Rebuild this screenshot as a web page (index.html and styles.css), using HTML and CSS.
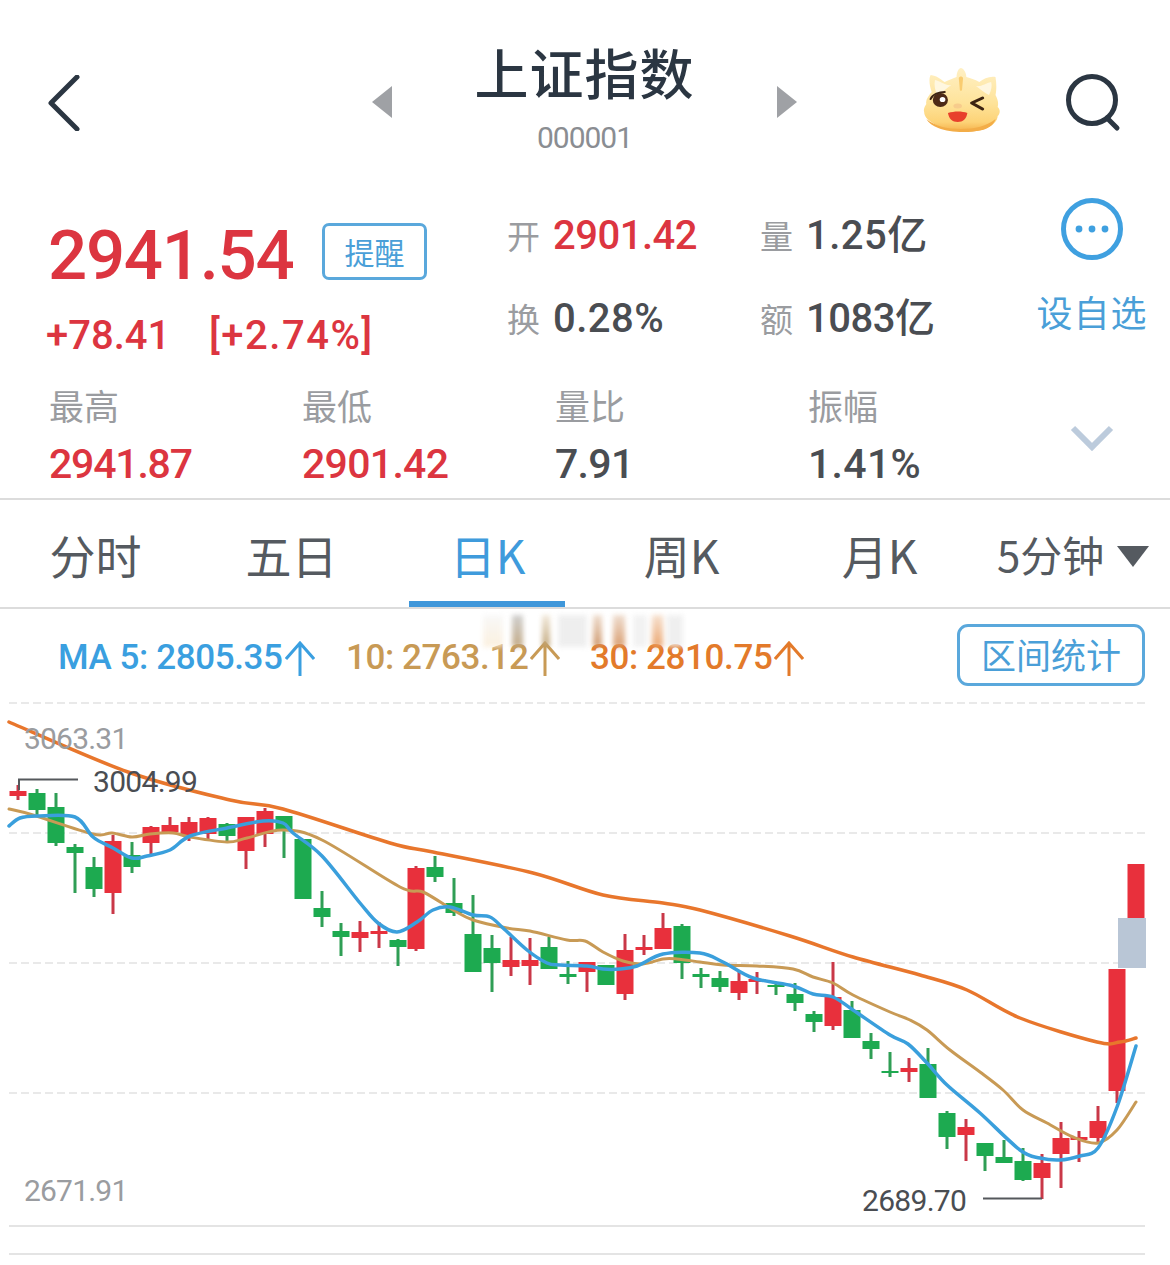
FILE: index.html
```html
<!DOCTYPE html>
<html lang="zh">
<head>
<meta charset="utf-8">
<title>上证指数</title>
<link rel="stylesheet" href="styles.css">
</head>
<body>
<div class="page">
  <header class="topbar">
    <svg class="back" width="34" height="56" viewBox="0 0 34 56"><path d="M30 2 4 28l26 26" /></svg>
    <div class="switcher">
      <svg width="22" height="32" viewBox="0 0 22 32"><path class="tri" d="M21 0v32L1 16z"/></svg>
      <div class="titles">
        <div class="title">上证指数</div>
        <div class="code">000001</div>
      </div>
      <svg width="22" height="32" viewBox="0 0 22 32"><path class="tri" d="M1 0v32l20-16z"/></svg>
    </div>
    <div class="actions">
      <svg class="mascot" width="80" height="68" viewBox="2 0 74 68" preserveAspectRatio="none">
        <defs>
          <linearGradient id="skin" x1="0" y1="0" x2="0" y2="1"><stop offset="0" stop-color="#fff0c4"/><stop offset=".55" stop-color="#fee39a"/><stop offset=".85" stop-color="#fdd377"/><stop offset="1" stop-color="#f5b04a"/></linearGradient>
        </defs>
        <path fill="url(#skin)" d="M10 9c6 1 9 4 13 7 4-2 8-4 11-5 0-5 2-9 4-9s5 4 5 9c4 1 9 3 12 5 4-3 9-6 15-5 1 6 1 13 0 18 2 4 3 8 2 12 3 3 2 7 0 9 0 5-5 10-12 13-8 3-17 3-24 2-9 0-18-3-24-8-5-3-8-7-8-11-1-3 1-6 2-8-1-4 2-8 5-12-2-6-3-13-1-17z"/>
        <path fill="#fff7e0" d="M14 14c5 1 10 6 15 5-5 4-9 8-13 10-2-5-3-10-2-15zM66 16c-5 1-9 5-14 4 4 3 8 7 12 9 2-4 3-9 2-13z"/>
        <path fill="#f9cc70" d="M36 12c1-2 3-2 4 0l-1 12c0 1-2 1-2 0z"/>
        <path fill="#f3ad48" d="M6 53c8 7 19 10 32 10s24-3 32-10c-1 5-6 9-12 11-12 3-30 3-41-2-5-2-9-5-11-9z"/>
        <circle cx="19" cy="34" r="7" fill="#4d2a16"/><circle cx="21" cy="33.500" r="2.600" fill="#fff"/>
        <path class="lash" d="M10 33c2-5 8-7 13-7"/>
        <path class="wink" d="M58 32 48 37l10 6"/>
        <ellipse cx="35" cy="40" rx="4" ry="2.500" fill="#f7cc8c"/>
        <path fill="#e8402c" d="M26 47c6-2 13-2 18 0-1 6-4 9-9 9s-8-3-9-9z"/>
      </svg>
      <svg class="search" width="56" height="58" viewBox="0 0 56 58"><circle cx="27" cy="26" r="23.500"/><path d="m42 44 10 10"/></svg>
    </div>
  </header>

  <section class="quote">
    <div class="main">
      <div class="price-row"><span class="price">2941.54</span><span class="remind">提醒</span></div>
      <div class="change"><span class="chg-a">+78.41</span><span class="chg-b">[+2.74%]</span></div>
    </div>
    <div class="cells">
      <div class="cell"><span class="k">开</span><span class="v red">2901.42</span></div>
      <div class="cell"><span class="k">量</span><span class="v wide">1.25亿</span></div>
      <div class="cell"><span class="k">换</span><span class="v wide">0.28%</span></div>
      <div class="cell"><span class="k">额</span><span class="v">1083亿</span></div>
    </div>
    <div class="watch">
      <svg width="62" height="62" viewBox="0 0 62 62"><circle class="ring" cx="31" cy="31" r="28.500"/><circle class="dot" cx="18" cy="31" r="3.400"/><circle class="dot" cx="31" cy="31" r="3.400"/><circle class="dot" cx="44" cy="31" r="3.400"/></svg>
      <span>设自选</span>
    </div>
  </section>

  <section class="range">
    <div class="stat"><div class="label">最高</div><div class="num red tight">2941.87</div></div>
    <div class="stat"><div class="label">最低</div><div class="num red">2901.42</div></div>
    <div class="stat"><div class="label">量比</div><div class="num">7.91</div></div>
    <div class="stat"><div class="label">振幅</div><div class="num wide">1.41%</div></div>
    <svg class="chev" width="44" height="26" viewBox="0 0 44 26"><path d="M3 3l19 19L41 3"/></svg>
  </section>

  <nav class="tabs">
    <span class="tab">分时</span>
    <span class="tab">五日</span>
    <span class="tab on">日K</span>
    <span class="tab week">周K</span>
    <span class="tab">月K</span>
    <span class="tab more">5分钟<i class="caret"></i></span>
  </nav>

  <section class="ma">
    <div class="smudge"><i></i><i></i><i></i><i></i><i></i><i></i><i></i><i></i><i></i></div>
    <span class="ma-item m5">MA 5: 2805.35<svg class="arrow" width="30" height="35" viewBox="0 0 30 35"><path d="M1 18 15 2l14 16M15 2v33"/></svg></span>
    <span class="ma-item m10">10: 2763.12<svg class="arrow" width="30" height="35" viewBox="0 0 30 35"><path d="M1 18 15 2l14 16M15 2v33"/></svg></span>
    <span class="ma-item m30">30: 2810.75<svg class="arrow" width="30" height="35" viewBox="0 0 30 35"><path d="M1 18 15 2l14 16M15 2v33"/></svg></span>
    <span class="stats-btn">区间统计</span>
  </section>

  <svg class="chart" width="1170" height="565" viewBox="0 700 1170 565">
    <path class="grid" d="M9 703H1145M9 833H1145M9 963H1145M9 1093H1145"/>
    <path class="base" d="M9 1226H1145M9 1254H1145"/>
    <path class="wick-g" d="M37 789v26M56 793v53M75 844v49M94 857v40M132 842v31M227 823v18M284 816v42M322 891v36M341 923v33M398 939v27M435 856v26M454 878v38M473 895v77M492 935v57M549 937v32M568 961v23M682 924v55M701 968v20M720 971v21M776 982v13M795 983v28M814 1011v21M852 1001v37M871 1033v26M890 1052v25M928 1048v50M947 1111v38M985 1143v28M1004 1140v23M1023 1148v33"/>
    <path class="wick-r" d="M18 785v15M113 835v79M151 826v28M170 817v15M189 817v24M208 817v22M246 817v52M265 808v39M360 921v31M379 922v26M416 866v85M511 937v39M530 938v47M587 962v30M625 934v66M644 935v20M663 913v36M739 972v28M757 972v22M833 962v68M909 1058v24M966 1119v42M1042 1154v45M1061 1122v66M1079 1131v31M1098 1106v37M1117 1091v12"/>
    <path class="body-g" d="M28.500 793h17v17h-17zM47.500 807h17v36h-17zM66.500 847h17v6h-17zM85.500 867h17v22h-17zM123.500 855h17v12h-17zM218.500 824h17v12h-17zM275.500 816h17v14h-17zM294.500 839h17v60h-17zM313.500 908h17v9h-17zM332.500 931h17v6h-17zM389.500 940h17v7h-17zM426.500 867h17v10h-17zM445.500 903h17v10h-17zM464.500 934h17v38h-17zM483.500 948h17v15h-17zM540.500 947h17v22h-17zM559.500 974h17v3h-17zM597.500 965h17v20h-17zM673.500 926h17v37h-17zM692.500 974h17v3h-17zM711.500 978h17v9h-17zM767.500 985h17v2h-17zM786.500 994h17v9h-17zM805.500 1014h17v8h-17zM843.500 1010h17v28h-17zM862.500 1041h17v8h-17zM881.500 1071h17v2h-17zM919.500 1064h17v34h-17zM938.500 1113h17v24h-17zM976.500 1143h17v13h-17zM995.500 1157h17v6h-17zM1014.500 1161h17v19h-17z"/>
    <path class="body-r" d="M9.500 791h17v5h-17zM104.500 841h17v52h-17zM142.500 827h17v16h-17zM161.500 825h17v7h-17zM180.500 822h17v13h-17zM199.500 818h17v16h-17zM237.500 817h17v34h-17zM256.500 811h17v23h-17zM351.500 932h17v6h-17zM370.500 931h17v3h-17zM407.500 868h17v81h-17zM502.500 960h17v7h-17zM521.500 960h17v6h-17zM578.500 962h17v10h-17zM616.500 950h17v44h-17zM635.500 947h17v3h-17zM654.500 928h17v21h-17zM730.500 981h17v12h-17zM748.500 979h17v3h-17zM824.500 997h17v29h-17zM900.500 1068h17v4h-17zM957.500 1127h17v8h-17zM1033.500 1163h17v15h-17zM1052.500 1138h17v16h-17zM1070.500 1137h17v3h-17zM1089.500 1121h17v17h-17zM1108.500 969h17v122h-17zM1127.500 864h17v54h-17z"/>
    <rect class="cursor" x="1118" y="918" width="28" height="50"/>
    <path class="l30" data-pts="9 722 128 772 230 800 283 809 390 843 433 852 533 873 603 895 663 903 700 910 790 936 853 957 920 975 967 990 1020 1018 1097 1042 1120 1042 1136 1038"/>
    <path class="l10" data-pts="9 809 33 815 93 834 112 833 132 837 150 834 173 833 190 837 227 842 247 838 283 830 322 840 400 887 423 892 453 910 473 920 507 928 530 931 567 940 585 941 603 952 623 961 643 964 663 959 677 959 700 962 723 965 757 966 793 969 813 977 833 983 853 995 890 1012 910 1020 927 1030 950 1050 980 1072 1003 1090 1023 1110 1047 1123 1073 1137 1098 1143 1117 1130 1136 1102"/>
    <path class="l5" data-pts="9 826 20 818 37 816 75 817 93 837 113 848 132 858 147 856 170 850 190 836 227 828 263 821 283 823 293 833 322 856 360 903 378 923 397 932 417 922 433 910 450 907 473 915 490 917 503 928 527 950 547 963 560 965 587 966 603 969 620 969 637 966 663 954 700 953 723 962 753 978 793 986 813 994 833 997 853 1010 890 1035 908 1044 927 1063 947 1085 980 1113 1020 1150 1040 1158 1060 1160 1080 1156 1098 1148 1117 1107 1136 1046"/>
    <path class="tick" d="M19 790v-10.500H78M983 1198.500H1042"/>
    <text class="lbl-gray" x="24" y="749">3063.31</text>
    <text class="lbl-dark" x="93" y="792">3004.99</text>
    <text class="lbl-gray" x="24" y="1201">2671.91</text>
    <text class="lbl-dark" x="862" y="1211">2689.70</text>
  </svg>
</div>
<script src="chart.js"></script>
</body>
</html>
```
FILE: styles.css
```css
* { box-sizing: border-box; }
html, body { margin: 0; background: #fff; }
body { font-family: "Roboto", "Noto Sans CJK SC", sans-serif; width: 1170px; height: 1265px; overflow: hidden; }
.page { width: 1170px; display: flex; flex-direction: column; }
.red { color: #dc3540; }

.topbar { height: 186px; display: flex; align-items: flex-start; padding: 41px 49px 0 47px; position: relative; }
.back { margin-top: 34px; flex: none; }
.back path { fill: none; stroke: #2b3642; stroke-width: 5; stroke-linecap: round; stroke-linejoin: round; }
.switcher { flex: none; display: flex; align-items: flex-start; margin-left: 290px; }
.switcher svg { margin-top: 45px; flex: none; }
.tri { fill: #9fa1a5; }
.titles { width: 383px; text-align: center; }
.title { font: 500 54px/62px "Noto Sans CJK SC", sans-serif; color: #2b3642; letter-spacing: 1px; }
.code { font-size: 30px; line-height: 34px; margin-top: 18px; color: #8a8d92; letter-spacing: -1px; }
.actions { flex: 1; display: flex; justify-content: flex-end; align-items: flex-start; gap: 63px; padding-top: 25px; }
.mascot { flex: none; filter: blur(.5px); }
.wink, .lash { fill: none; stroke: #3c2312; stroke-width: 3; stroke-linecap: round; stroke-linejoin: round; }
.lash { stroke-width: 2; }
.search { flex: none; margin-top: 8px; }
.search circle, .search path { fill: none; stroke: #2b3642; stroke-width: 5; stroke-linecap: round; }

.quote { height: 187px; display: flex; align-items: flex-start; padding-left: 48px; }
.main { width: 459px; flex: none; }
.price-row { display: flex; align-items: center; height: 76px; margin-top: 30px; }
.price { font-size: 69px; line-height: 76px; margin-top: 4px; font-weight: 500; color: #dc3540; letter-spacing: -1.3px; width: 274px; }
.remind { width: 105px; height: 57px; margin-top: -6px; border: 3px solid #5aa8dc; border-radius: 7px; color: #4a9fd8; font: 400 30px/50px "Noto Sans CJK SC", sans-serif; text-align: center; }
.change { display: flex; margin-top: 20px; margin-left: -2px; font-size: 40px; line-height: 48px; font-weight: 500; color: #dc3540; }
.chg-a { width: 163px; }
.chg-b { letter-spacing: 1.5px; }
.cells { width: 529px; flex: none; display: grid; grid-template-columns: 253px 1fr; row-gap: 35px; padding-top: 25px; }
.cell { display: flex; align-items: baseline; gap: 13px; height: 48px; font-size: 40px; line-height: 48px; white-space: nowrap; }
.k { font: 400 33px/48px "Noto Sans CJK SC", sans-serif; color: #9a9ca0; }
.v { color: #4a4d52; font-weight: 500; letter-spacing: -.5px; }
.v.red { color: #dc3540; }
.v.wide { letter-spacing: .5px; }
.watch { flex: none; display: flex; flex-direction: column; align-items: center; width: 112px; padding-top: 12px; gap: 27px; color: #4a9fd8; font: 400 36px/48px "Noto Sans CJK SC", sans-serif; letter-spacing: 1px; white-space: nowrap; }
.ring { fill: none; stroke: #3fa0e0; stroke-width: 5; }
.dot { fill: #3fa0e0; }

.range { height: 127px; display: flex; align-items: flex-start; padding: 10px 0 0 49px; border-bottom: 2px solid #dcdcdc; position: relative; }
.stat { width: 253px; flex: none; }
.label { font: 400 35px/44px "Noto Sans CJK SC", sans-serif; color: #9a9ca0; }
.num { font-size: 41px; line-height: 46px; margin-top: 14px; font-weight: 500; color: #4a4d52; letter-spacing: -.7px; }
.num.red { color: #dc3540; }
.num.tight { letter-spacing: -1.2px; }
.num.wide { letter-spacing: .3px; }
.chev { position: absolute; left: 1070px; top: 52px; }
.chev path { fill: none; stroke: #bccbdc; stroke-width: 6; }

.tabs { height: 109px; display: grid; grid-template-columns: 196px 196px 196px 196px 196px 1fr; align-items: center; border-bottom: 2px solid #dcdcdc; }
.tab { height: 107px; display: flex; align-items: center; justify-content: center; padding: 1px 5px 0 0; font: 400 46px/104px "Noto Sans CJK SC", sans-serif; color: #555a60; position: relative; }
.tab.on { color: #3f9bdc; }
.tab.week { padding-right: 9px; }
.tab.on::after { content: ""; position: absolute; left: 17px; right: 23px; bottom: 0; height: 6px; background: #3f97da; }
.tab.more { font-size: 42px; justify-content: flex-start; white-space: nowrap; margin-left: 17px; gap: 13px; padding-right: 0; padding-top: 1px; }
.caret { width: 0; height: 0; margin-top: 4px; border-left: 16px solid transparent; border-right: 16px solid transparent; border-top: 21px solid #555a60; }

.ma { height: 91px; display: flex; align-items: center; padding-left: 58px; font-size: 35px; font-weight: 500; white-space: nowrap; position: relative; letter-spacing: -.4px; }
.ma-item { display: flex; align-items: center; gap: 2px; flex: none; padding-top: 6px; }
.arrow { flex: none; margin-top: 2px; }
.arrow path { fill: none; stroke: currentColor; stroke-width: 3; }
.m5 { color: #3a9fe0; width: 288px; }
.m10 { color: #c89a55; width: 244px; }
.m30 { color: #e37a2a; width: 367px; }
.stats-btn { flex: none; width: 188px; height: 62px; border: 3px solid #5aa8dc; border-radius: 11px; color: #4a9fd8; font: 400 35px/54px "Noto Sans CJK SC", sans-serif; text-align: center; letter-spacing: 0; }
.smudge { position: absolute; left: 483px; top: 6px; width: 200px; height: 32px; filter: blur(2.5px); opacity: .85; }
.smudge i { position: absolute; top: 0; bottom: 0; display: block; }
.smudge i:nth-child(1) { left: 0; width: 20px; background: linear-gradient(#f7f7f7, #fbeeda); }
.smudge i:nth-child(2) { left: 29px; width: 11px; background: linear-gradient(#c8c8c8, #bb9e74); }
.smudge i:nth-child(3) { left: 59px; width: 8px; background: linear-gradient(#f0e6d6, #b89a68); }
.smudge i:nth-child(4) { left: 75px; width: 29px; background: #ececec; }
.smudge i:nth-child(5) { left: 110px; width: 9px; background: linear-gradient(#ecd8c8, #c88a58); }
.smudge i:nth-child(6) { left: 130px; width: 12px; background: linear-gradient(#ecd8c8, #d4905c); }
.smudge i:nth-child(7) { left: 150px; width: 14px; background: #f0f0f0; }
.smudge i:nth-child(8) { left: 169px; width: 11px; background: linear-gradient(#f5dcc8, #e89a5c); }
.smudge i:nth-child(9) { left: 184px; width: 16px; background: #ededed; }

.chart { display: block; flex: none; }
.grid { fill: none; stroke: #e2e2e2; stroke-width: 1.5; stroke-dasharray: 8 4; }
.base { fill: none; stroke: #e4e4e4; stroke-width: 2; }
.wick-g { fill: none; stroke: #2f9e55; stroke-width: 3; }
.wick-r { fill: none; stroke: #c93848; stroke-width: 3; }
.body-g { fill: #1daa50; }
.body-r { fill: #e8303c; }
.cursor { fill: #b9c6d6; }
.l30, .l10, .l5 { fill: none; stroke-linejoin: round; stroke-linecap: round; }
.l30 { stroke: #e8762c; stroke-width: 3.5; }
.l10 { stroke: #c89a55; stroke-width: 3; }
.l5 { stroke: #3a9fdc; stroke-width: 3.5; }
.tick { fill: none; stroke: #55585c; stroke-width: 2; }
.lbl-gray { font: 400 30px "Roboto", sans-serif; fill: #9a9ca0; letter-spacing: -.8px; }
.lbl-dark { font: 400 30px "Roboto", sans-serif; fill: #4a4d52; letter-spacing: -.7px; }
```
FILE: chart.js
```js
// Draws each moving-average line as a smooth curve through its data points.
document.querySelectorAll('path[data-pts]').forEach(function (line) {
  var n = line.getAttribute('data-pts').trim().split(/\s+/).map(Number);
  var p = [];
  for (var i = 0; i < n.length; i += 2) p.push([n[i], n[i + 1]]);
  var d = 'M' + p[0][0] + ' ' + p[0][1];
  for (var j = 0; j < p.length - 1; j++) {
    var a = p[Math.max(j - 1, 0)], b = p[j], c = p[j + 1], e = p[Math.min(j + 2, p.length - 1)];
    d += 'C' + (b[0] + (c[0] - a[0]) / 6) + ' ' + (b[1] + (c[1] - a[1]) / 6) + ' ' +
         (c[0] - (e[0] - b[0]) / 6) + ' ' + (c[1] - (e[1] - b[1]) / 6) + ' ' + c[0] + ' ' + c[1];
  }
  line.setAttribute('d', d);
});
```
